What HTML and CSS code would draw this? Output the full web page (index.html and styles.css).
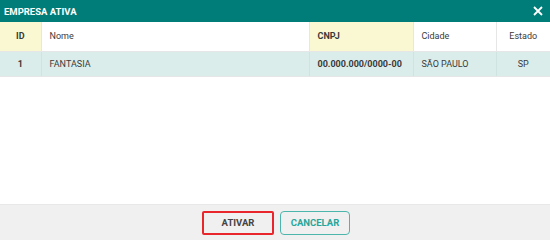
FILE: index.html
```html
<!DOCTYPE html>
<html lang="pt">
  <head>
    <meta charset="UTF-8" />
    <title>Empresa Ativa</title>
    <link rel="stylesheet" href="styles.css">
  </head>
  <body>
    <div class="dialog">
      <div class="dialog-header">
        <span class="dialog-title">EMPRESA ATIVA</span>
        <svg class="dialog-close" width="10" height="10" viewBox="0 0 10 10">
          <path d="M1 1L9 9M9 1L1 9" stroke="#ffffff" stroke-width="1.8" />
        </svg>
      </div>
      <div class="dialog-body">
        <table class="grid">
          <colgroup>
            <col class="col-id" />
            <col class="col-nome" />
            <col class="col-cnpj" />
            <col class="col-cidade" />
            <col class="col-estado" />
          </colgroup>
          <thead>
            <tr>
              <th class="sorted center">ID</th>
              <th>Nome</th>
              <th class="sorted">CNPJ</th>
              <th>Cidade</th>
              <th class="center">Estado</th>
            </tr>
          </thead>
          <tbody>
            <tr class="selected">
              <td class="center strong">1</td>
              <td>FANTASIA</td>
              <td class="strong">00.000.000/0000-00</td>
              <td>SÃO PAULO</td>
              <td class="center">SP</td>
            </tr>
          </tbody>
        </table>
      </div>
      <div class="dialog-footer">
        <button class="btn btn-ativar">ATIVAR</button>
        <button class="btn btn-cancelar">CANCELAR</button>
      </div>
    </div>
  </body>
</html>
```

FILE: styles.css
```css
* {
  margin: 0;
  padding: 0;
  box-sizing: border-box;
}
body {
  font-family: Roboto, "Liberation Sans", sans-serif;
  background: #ffffff;
}
.dialog {
  width: 550px;
  height: 240px;
  display: flex;
  flex-direction: column;
}
.dialog-header {
  height: 22px;
  background: #007d79;
  color: #ffffff;
  display: flex;
  align-items: center;
  justify-content: space-between;
  padding: 0 7px 0 4px;
}
.dialog-title {
  font-size: 9.5px;
  font-weight: bold;
}
.dialog-body {
  flex: 1;
}
.grid {
  width: 550px;
  border-collapse: collapse;
  table-layout: fixed;
  font-size: 9px;
  color: #3a3a3a;
  white-space: nowrap;
}
.col-id { width: 41px; }
.col-nome { width: 268px; }
.col-cnpj { width: 104px; }
.col-cidade { width: 83px; }
.col-estado { width: 54px; }
.grid th {
  height: 29px;
  text-align: left;
  font-weight: normal;
  padding: 0 8px;
  border-right: 1px solid #e6e6e6;
  border-bottom: 1px solid #e6e6e6;
}
.grid th:last-child,
.grid td:last-child {
  border-right: none;
}
.grid th.sorted {
  background: #faf8d2;
  font-weight: bold;
}
.grid td {
  height: 25px;
  padding: 0 8px;
  border-right: 1px solid #cfe3e1;
  border-bottom: 1px solid #e6e6e6;
}
.grid tr.selected td {
  background: #daedeb;
}
.grid .center {
  text-align: center;
}
.grid .strong {
  font-weight: bold;
}
.dialog-footer {
  height: 36px;
  background: #f0f0f0;
  border-top: 1px solid #e8e8e8;
  display: flex;
  justify-content: center;
  align-items: center;
  gap: 6px;
  padding-left: 2px;
}
.btn {
  font-family: Roboto, "Liberation Sans", sans-serif;
  font-size: 9.5px;
  font-weight: bold;
  background: #f0f0f0;
  border-radius: 2px;
  cursor: pointer;
}
.btn-ativar {
  width: 72px;
  height: 24px;
  color: #444444;
  border: 2px solid #e8262b;
}
.btn-cancelar {
  width: 70px;
  height: 24px;
  color: #26a69a;
  border: 1px solid #4db6ac;
  border-radius: 4px;
}
```
